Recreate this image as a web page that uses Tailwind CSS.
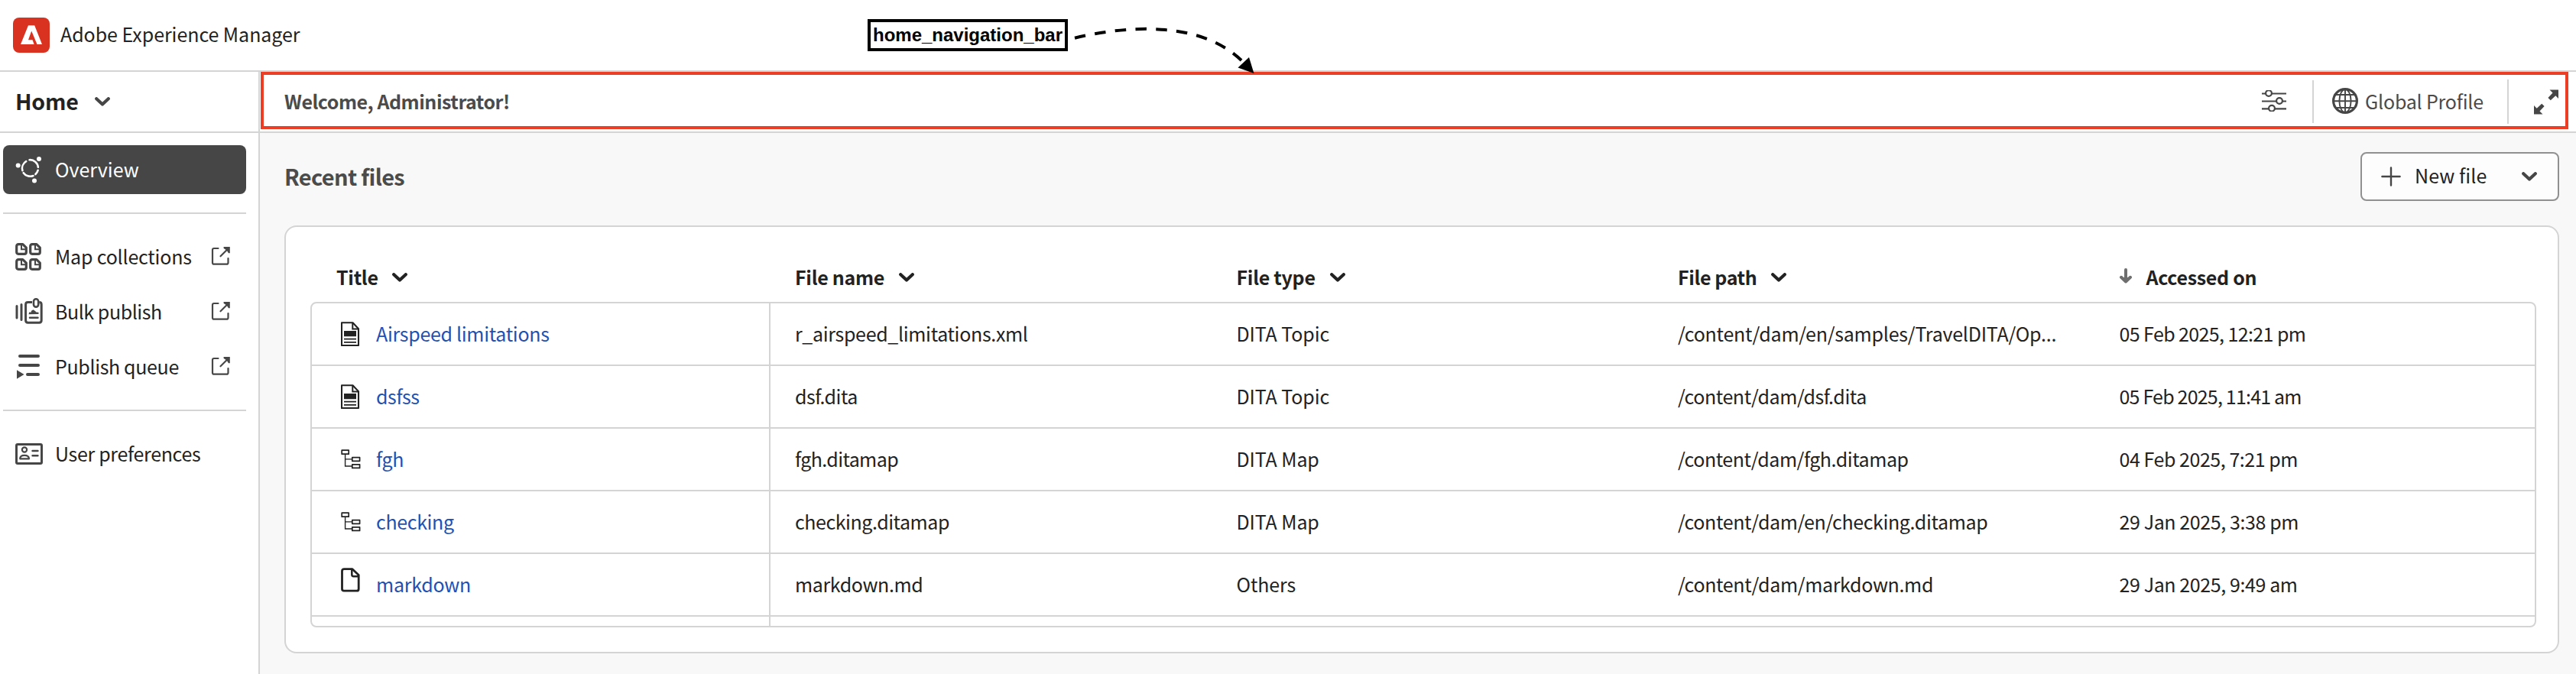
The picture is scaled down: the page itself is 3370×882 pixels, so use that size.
<!DOCTYPE html>
<html lang="en">
<head>
<meta charset="utf-8">
<title>Adobe Experience Manager</title>
<script src="https://cdn.jsdelivr.net/npm/@tailwindcss/browser@4"></script>
</head>
<body class="relative flex h-[882px] w-[3370px] flex-col overflow-hidden bg-white font-['Noto_Sans_CJK_SC','Noto_Sans',sans-serif] text-[25px] leading-9 tracking-[-0.25px] whitespace-nowrap text-[#222]">

<svg class="hidden">
  <symbol id="chev" viewBox="0 0 20 12"><path d="M2.2 2.2 10 9.6 17.8 2.2" fill="none" stroke="currentColor" stroke-width="4.2" stroke-linecap="round" stroke-linejoin="round"/></symbol>
  <symbol id="ext" viewBox="0 0 26 26"><path d="M9.5 3H4Q2 3 2 5V21.7Q2 23.7 4 23.7H20.5Q22.5 23.7 22.5 21.7V16" fill="none" stroke="currentColor" stroke-width="2.2" stroke-linecap="round"/><path d="M12.5 13.3 22 3.8" stroke="currentColor" stroke-width="2.2" stroke-linecap="round"/><path d="M16.6 1H24.8V9.2L22.9 9.2 20.6 5.4 16.6 3Z" fill="currentColor"/></symbol>
  <symbol id="topic" viewBox="0 0 25 32"><path d="M1 1.2H15.5L23 9.3V31H1Z" fill="none" stroke="currentColor" stroke-width="2.1" stroke-linejoin="round"/><path d="M15.3 1V9.4H23.2" fill="none" stroke="currentColor" stroke-width="2"/><path d="M4 12H20V19.3H4ZM4 21.8H20V23.6H4ZM4 26H20V27.8H4Z" fill="currentColor"/></symbol>
  <symbol id="tree" viewBox="0 0 26 26"><path d="M1.2 1.2H10.2V6.2H1.2ZM14.8 10.7H24.6V15.3H14.8ZM14.8 19.8H24.6V24.4H14.8Z" fill="none" stroke="currentColor" stroke-width="1.7" stroke-linejoin="round"/><path d="M5.6 6.5V22H14.8M5.6 12.9H14.8" fill="none" stroke="currentColor" stroke-width="1.4"/></symbol>
  <symbol id="file" viewBox="0 0 25 32"><path d="M4.3 1.7H15L23.2 9.5V27.7Q23.2 30.2 20.7 30.2H4Q1.5 30.2 1.5 27.7V4.2Q1.5 1.7 4.3 1.7Z" fill="none" stroke="currentColor" stroke-width="2.8" stroke-linejoin="round"/><path d="M14.3 2V9Q14.3 11.2 16.5 11.2H23" fill="none" stroke="currentColor" stroke-width="2.5"/></symbol>
  <symbol id="mini" viewBox="0 0 16 16"><path d="M4.2 1.7H9.8L14.3 6.2V12Q14.3 14.3 12 14.3H4Q1.7 14.3 1.7 12V4.2Q1.7 1.7 4.2 1.7Z" fill="none" stroke="currentColor" stroke-width="3.2" stroke-linejoin="round"/><path d="M8 3V8.2H13.5" fill="none" stroke="currentColor" stroke-width="2"/></symbol>
</svg>

<header class="flex h-[94px] shrink-0 items-center gap-[14px] border-b-2 border-[#d4d4d4] pl-[17px]">
  <svg class="h-[46px] w-12" viewBox="0 0 48 46"><rect width="48" height="46" rx="8" fill="#d93221"/><path d="M10 35 20 10.2H28.2L38 35H31.5L24.2 17.6 20 29.2H25.5L27.6 35Z" fill="#fff"/></svg>
  <div class="pb-1 tracking-[-0.05px]">Adobe Experience Manager</div>
</header>

<div class="flex min-h-0 flex-1">
  <aside class="flex w-[340px] shrink-0 flex-col border-r-2 border-[#d4d4d4] text-[#464646]">
    <div class="flex h-20 shrink-0 items-center gap-5 border-b-2 border-[#d4d4d4] pl-5">
      <div class="w-[84px] pb-0.5 text-[28.5px] font-bold tracking-[-0.2px] text-[#222]">Home</div>
      <svg class="h-3 w-5"><use href="#chev"/></svg>
    </div>
    <nav class="flex w-[322px] flex-col pt-4 pl-1">
      <div class="flex h-16 items-center rounded-lg bg-[#464646] pl-4 text-white">
        <svg class="mr-px h-9 w-[51px]" viewBox="0 0 51 36"><g fill="none" stroke="#fff" stroke-width="2.6" stroke-linecap="round"><path d="M18.5 5.2A10.7 10.7 0 0 1 29.9 14.8M14.2 7.2A10.7 10.7 0 0 0 9.4 19.2M10.7 22.2A10.7 10.7 0 0 0 23.5 26M26.4 24A10.7 10.7 0 0 0 29.6 18.8"/></g><g fill="#fff"><circle cx="3.7" cy="12.6" r="3"/><circle cx="31" cy="4" r="3"/><circle cx="25" cy="32.4" r="3"/></g></svg>
        <span class="pb-0.5 tracking-normal">Overview</span>
      </div>
      <div class="my-6 h-0.5 bg-[#d4d4d4]"></div>
      <div class="flex flex-col gap-2">
        <div class="flex h-16 items-center pr-5 pl-4">
          <svg class="mr-px h-9 w-[51px]" viewBox="0 0 51 36"><use href="#mini" x="0" y="0" width="16" height="16"/><use href="#mini" x="18" y="0" width="16" height="16"/><use href="#mini" x="0" y="20" width="16" height="16"/><use href="#mini" x="18" y="20" width="16" height="16"/></svg>
          <span class="flex-1 pb-0.5 tracking-[-0.2px] text-[#222]">Map collections</span>
          <svg class="mb-0.5 h-[26px] w-[26px]"><use href="#ext"/></svg>
        </div>
        <div class="flex h-16 items-center pr-5 pl-4">
          <svg class="mr-px h-9 w-[51px]" viewBox="0 0 51 36"><path d="M2 10.5V26M8 8.5V28.5" stroke="currentColor" stroke-width="3" stroke-linecap="round"/><path d="M22 5.6H16.5Q13.6 5.6 13.6 8.5V29.3Q13.6 32.2 16.5 32.2H31.3Q34.2 32.2 34.2 29.3V8.5Q34.2 5.6 31.3 5.6" fill="none" stroke="currentColor" stroke-width="3"/><rect x="24" y="1.3" width="6.2" height="10.4" rx="3.1" fill="#fff" stroke="currentColor" stroke-width="2.6"/><path d="M17.5 21.3 18.2 18.5 20.5 18.8 21 16.8 23.5 15.2 26 17 27.5 18.5 30.5 18.8V21Z" fill="currentColor"/><path d="M19 25.7H29.5" stroke="currentColor" stroke-width="2.5" stroke-linecap="round"/></svg>
          <span class="flex-1 pb-0.5 tracking-[-0.45px] text-[#222]">Bulk publish</span>
          <svg class="mb-0.5 h-[26px] w-[26px]"><use href="#ext"/></svg>
        </div>
        <div class="flex h-16 items-center pr-5 pl-4">
          <svg class="mr-px h-9 w-[51px]" viewBox="0 0 51 36"><path d="M6 4H30M6 16H30M16 28H30" stroke="currentColor" stroke-width="4" stroke-linecap="round"/><path d="M2 22.3 11.5 28 2 33.7Z" fill="currentColor"/></svg>
          <span class="flex-1 pb-0.5 tracking-[-0.35px] text-[#222]">Publish queue</span>
          <svg class="mb-0.5 h-[26px] w-[26px]"><use href="#ext"/></svg>
        </div>
      </div>
      <div class="my-6 h-0.5 bg-[#d4d4d4]"></div>
      <div class="flex h-16 items-center pl-4">
        <svg class="mr-px h-9 w-[51px]" viewBox="0 0 51 36"><rect x="1.5" y="5.5" width="33" height="25" rx="1.5" fill="none" stroke="currentColor" stroke-width="3"/><circle cx="12" cy="12.5" r="3.1" fill="none" stroke="currentColor" stroke-width="2.2"/><path d="M6.2 24.3Q6.2 19.8 12 19.8T18 24.3Z" fill="none" stroke="currentColor" stroke-width="2.2" stroke-linejoin="round"/><path d="M22.5 14H29.5M22.5 20.3H29.5" stroke="currentColor" stroke-width="2.4" stroke-linecap="round"/></svg>
        <span class="pb-0.5 tracking-[-0.32px] text-[#222]">User preferences</span>
      </div>
    </nav>
  </aside>

  <main class="flex min-w-0 flex-1 flex-col bg-[#f8f8f8]">
    <div class="flex h-20 shrink-0 border-b-2 border-[#d4d4d4] bg-white pl-px text-[#4b4b4b]">
      <div class="flex h-[75px] w-[3019px] items-center border-4 border-[#eb3e24] pl-[27px]">
        <div class="flex-1 font-bold tracking-[-0.48px]">Welcome, Administrator!</div>
        <svg class="mr-[34px] h-6 w-8" viewBox="0 0 32 24"><path d="M0 2.5H32M0 12.5H32M0 22.3H32" stroke="#464646" stroke-width="2.2"/></svg>
        <div class="mt-[3px] h-14 w-0.5 bg-[#d4d4d4]"></div>
        <svg class="mr-[9px] ml-6 h-[34px] w-[34px]" viewBox="0 0 34 34"><g fill="none" stroke="#464646"><circle cx="17" cy="17" r="15.4" stroke-width="3.2"/><path d="M17 2V32M2 17.3H32M4.5 9H29.5M4.5 26H29.5" stroke-width="1.9"/><ellipse cx="17" cy="17" rx="7.6" ry="15" stroke-width="1.9"/></g></svg>
        <div class="w-[186px] tracking-[-0.2px]">Global Profile</div>
        <div class="mt-[3px] h-[58px] w-0.5 bg-[#d4d4d4]"></div>
        <svg class="mt-[3px] mr-[9px] ml-[33px] h-[33px] w-[32px]" viewBox="0 0 32 33"><g fill="#464646"><path d="M20.5 .5H32V12L28.3 8.3 21.8 14.2 18.4 11 24.5 4.5Z"/><path d="M11.5 32.5H0V21L3.7 24.7 10.2 18.8 13.6 22 7.5 28.5Z"/></g></svg>
      </div>
    </div>

    <div class="mt-[25px] mr-[22px] ml-8 flex h-16 items-center justify-between">
      <h1 class="pb-0.5 text-[29px] font-bold tracking-[-0.65px] text-[#4b4b4b]">Recent files</h1>
      <button class="flex h-16 w-[260px] items-center rounded-lg border-2 border-[#909090] bg-[#fdfdfd] pl-[25px]">
        <svg class="h-[26px] w-[26px]" viewBox="0 0 26 26"><path d="M13 1.4V24.6M1.4 13H24.6" stroke="#464646" stroke-width="2.4" stroke-linecap="round"/></svg>
        <span class="w-[140px] pb-1 pl-[18px] text-left tracking-[0.1px]">New file</span>
        <svg class="ml-[18px] h-3 w-5 text-[#464646]"><use href="#chev"/></svg>
      </button>
    </div>

    <section class="mt-8 mr-[22px] ml-8 flex h-[560px] flex-col rounded-2xl border-2 border-[#d4d4d4] bg-white pt-[34px] pr-7 pl-8">
      <div class="grid h-16 shrink-0 grid-cols-[600px_577.5px_577.5px_577.5px_1fr] items-center pl-0.5 font-bold tracking-[-0.3px]">
        <div class="flex items-center pl-8"><span class="w-[73px] pb-0.5">Title</span><svg class="mb-px h-3 w-5"><use href="#chev"/></svg></div>
        <div class="flex items-center pl-8"><span class="w-[136px] pb-0.5">File name</span><svg class="mb-px h-3 w-5"><use href="#chev"/></svg></div>
        <div class="flex items-center pl-8"><span class="w-[122px] pb-0.5">File type</span><svg class="mb-px h-3 w-5"><use href="#chev"/></svg></div>
        <div class="flex items-center pl-8"><span class="w-[122px] pb-0.5 tracking-[-0.4px]">File path</span><svg class="mb-px h-3 w-5"><use href="#chev"/></svg></div>
        <div class="flex items-center pl-[31px]"><svg class="mb-1 h-5 w-9" viewBox="0 0 36 20"><path d="M9 2V14" stroke="#6e6e6e" stroke-width="4" stroke-linecap="round"/><path d="M3 11.8 9 17.5 15 11.8" fill="none" stroke="#6e6e6e" stroke-width="4" stroke-linecap="round" stroke-linejoin="round"/><path d="M4 12H14L9 17Z" fill="#6e6e6e"/></svg><span class="pb-0.5">Accessed on</span></div>
      </div>
      <div id="rows" class="h-[426px] overflow-hidden rounded-lg border-2 border-[#d4d4d4]"></div>
    </section>
  </main>
</div>

<!-- callout -->
<div class="absolute top-[25px] left-[1135px] flex h-[42px] w-[262px] items-center justify-center border-4 border-black bg-white font-['Liberation_Sans',sans-serif] text-[24px] leading-none font-bold tracking-normal text-black">home_navigation_bar</div>
<svg class="absolute top-0 left-[1400px] h-[100px] w-[250px]" viewBox="1400 0 250 100"><path d="M1406 49.7C1480 32 1575 28 1627 82" fill="none" stroke="#000" stroke-width="4" stroke-dasharray="14.5 12.3"/><path d="M1640.5 96 1634 75 1619.5 88.5Z"/></svg>

<!-- slider knobs -->
<svg class="absolute top-[118px] left-[2959px] h-7 w-8" viewBox="0 -1.5 32 28"><g fill="#fff" stroke="#464646" stroke-width="2.2"><circle cx="9" cy="2.5" r="3.9"/><circle cx="23" cy="12.5" r="3.9"/><circle cx="13" cy="22.3" r="3.9"/></g></svg>

<template id="row">
  <div class="grid h-[82px] grid-cols-[600px_577.5px_577.5px_577.5px_1fr] border-b-2 border-[#d4d4d4]">
    <div class="flex items-center border-r-2 border-[#d4d4d4] pl-[38px]"><svg><use/></svg><span class="pb-0.5 pl-[21px] text-[#1f51b5]"></span></div>
    <div class="flex items-center pb-0.5 pl-8"></div>
    <div class="flex items-center pb-0.5 pl-8 tracking-[-0.1px]"></div>
    <div class="flex items-center pb-0.5 pl-8"></div>
    <div class="flex items-center pb-0.5 pl-8"></div>
  </div>
</template>
<script>
const size = {topic: "h-8 w-[25px]", tree: "h-[26px] w-[26px] -mr-px", file: "h-8 w-[25px] mb-3"};
// icon, [text, letter spacing] per column
const files = [
  ["topic", ["Airspeed limitations", -.3], ["r_airspeed_limitations.xml", -.33], "DITA Topic", ["/content/dam/en/samples/TravelDITA/Op...", -.22], ["05 Feb 2025, 12:21 pm", -.6]],
  ["topic", ["dsfss", -.4], ["dsf.dita", -.5], "DITA Topic", ["/content/dam/dsf.dita", -.42], ["05 Feb 2025, 11:41 am", -.8]],
  ["tree", ["fgh", -.3], ["fgh.ditamap", -.6], "DITA Map", ["/content/dam/fgh.ditamap", -.45], ["04 Feb 2025, 7:21 pm", -.45]],
  ["tree", ["checking", -.35], ["checking.ditamap", -.45], "DITA Map", ["/content/dam/en/checking.ditamap", -.37], ["29 Jan 2025, 3:38 pm", -.4]],
  ["file", ["markdown", -.25], ["markdown.md", -.4], "Others", ["/content/dam/markdown.md", -.35], ["29 Jan 2025, 9:49 am", -.4]],
  ["", "", "", "", "", ""]
];
const box = document.getElementById("rows"), tpl = document.getElementById("row");
for (const [icon, ...cols] of files) {
  const r = tpl.content.cloneNode(true).firstElementChild;
  const svg = r.querySelector("svg");
  if (icon) { svg.setAttribute("class", size[icon]); svg.firstChild.setAttribute("href", "#" + icon); } else svg.remove();
  cols.forEach((c, i) => {
    const el = i ? r.children[i] : r.querySelector("span");
    if (Array.isArray(c)) { el.textContent = c[0]; el.style.letterSpacing = c[1] + "px"; } else el.textContent = c;
  });
  box.appendChild(r);
}
</script>
</body>
</html>
